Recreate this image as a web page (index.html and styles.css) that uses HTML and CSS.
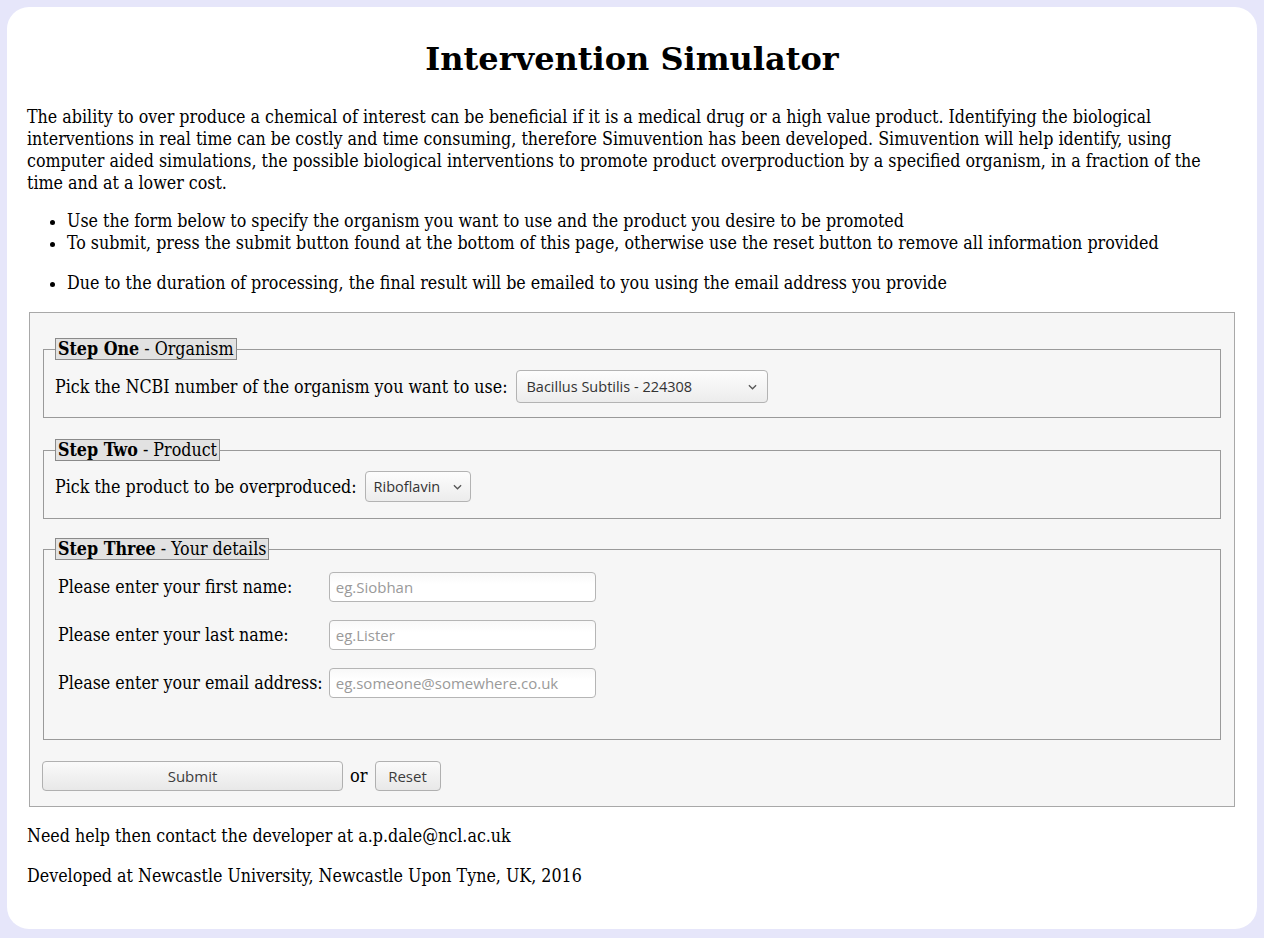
FILE: index.html
```html
<!DOCTYPE html>
<html>
<head>
<meta charset="utf-8">
<title>Intervention Simulator</title>
<link rel="stylesheet" href="styles.css">
</head>
<body>
<div class="page">
  <h1 class="title">Intervention Simulator</h1>
  <p class="intro">The ability to over produce a chemical of interest can be beneficial if it is a medical drug or a high value product. Identifying the biological interventions in real time can be costly and time consuming, therefore Simuvention has been developed. Simuvention will help identify, using computer aided simulations, the possible biological interventions to promote product overproduction by a specified organism, in a fraction of the time and at a lower cost.</p>
  <ul class="notes">
    <li>Use the form below to specify the organism you want to use and the product you desire to be promoted</li>
    <li>To submit, press the submit button found at the bottom of this page, otherwise use the reset button to remove all information provided</li>
    <li class="spaced">Due to the duration of processing, the final result will be emailed to you using the email address you provide</li>
  </ul>
  <form class="form">
    <fieldset class="outer">
      <fieldset class="step">
        <legend class="legend"><b>Step One</b> - Organism</legend>
        <div class="row">
          <label class="lbl">Pick the NCBI number of the organism you want to use:</label>
          <div class="select select-org"><span>Bacillus Subtilis - 224308</span><svg class="chev" viewBox="0 0 10 6" width="9" height="6"><path d="M1 1l4 4 4-4" fill="none" stroke="#555" stroke-width="1.4"/></svg></div>
        </div>
      </fieldset>
      <fieldset class="step step-two">
        <legend class="legend"><b>Step Two</b> - Product</legend>
        <div class="row">
          <label class="lbl">Pick the product to be overproduced:</label>
          <div class="select select-prod"><span>Riboflavin</span><svg class="chev" viewBox="0 0 10 6" width="9" height="6"><path d="M1 1l4 4 4-4" fill="none" stroke="#555" stroke-width="1.4"/></svg></div>
        </div>
      </fieldset>
      <fieldset class="step step-three">
        <legend class="legend"><b>Step Three</b> - Your details</legend>
        <table class="details">
          <tr><td class="dl">Please enter your first name:</td><td class="dv"><input class="field" type="text" placeholder="eg.Siobhan"></td></tr>
          <tr><td class="dl">Please enter your last name:</td><td class="dv"><input class="field" type="text" placeholder="eg.Lister"></td></tr>
          <tr><td class="dl">Please enter your email address:</td><td class="dv"><input class="field" type="text" placeholder="eg.someone@somewhere.co.uk"></td></tr>
        </table>
      </fieldset>
      <div class="actions">
        <button type="button" class="btn btn-submit">Submit</button>
        <span class="or">or</span>
        <button type="button" class="btn btn-reset">Reset</button>
      </div>
    </fieldset>
  </form>
  <p class="foot">Need help then contact the developer at a.p.dale@ncl.ac.uk</p>
  <p class="foot">Developed at Newcastle University, Newcastle Upon Tyne, UK, 2016</p>
</div>
</body>
</html>
```
FILE: styles.css
```css
html, body {
  margin: 0;
  padding: 0;
}
body {
  background: #e6e6fa;
  padding: 7px;
  font-family: "DejaVu Serif Condensed", "DejaVu Serif", serif;
  font-stretch: condensed;
  font-size: 17.7px;
  color: #000;
}
.page {
  background: #fff;
  border-radius: 22px;
  padding: 1px 20px 0;
  height: 922px;
  box-sizing: border-box;
}
.title {
  font-family: "DejaVu Serif", serif;
  font-stretch: normal;
  font-weight: bold;
  font-size: 32px;
  text-align: center;
  margin: 28px 0 24px;
  line-height: 46px;
}
.intro {
  margin: 0 0 16px;
  line-height: 22px;
}
.notes {
  margin: 0 0 18px;
  padding-left: 40px;
  line-height: 22px;
}
.notes .spaced {
  margin-top: 18px;
}
.form {
  margin: 0;
}
.outer {
  margin: 0 2px;
  padding: 25px 13px 15px;
  border: 1px solid #a8a8a8;
  background: #f6f6f6;
}
.step {
  margin: 0 0 21px;
  padding: 10px 12px 14px 11px;
  border: 1px solid #9a9a9a;
}
.step-two {
  padding-bottom: 16px;
  margin-bottom: 19px;
}
.legend {
  background: #e2e2e2;
  border: 1px solid #8a8a8a;
  padding: 0 2px;
  line-height: 20px;
}
.row {
  display: flex;
  align-items: center;
  gap: 8px;
}
.lbl {
  line-height: 22px;
}
.select {
  display: flex;
  align-items: center;
  justify-content: space-between;
  box-sizing: border-box;
  border: 1px solid #b3b3b3;
  border-radius: 4px;
  background: linear-gradient(#fdfdfd, #ececec);
  font-family: "Open Sans", "Noto Sans", sans-serif;
  font-stretch: normal;
  font-size: 14.5px;
  color: #333;
  padding: 0 10px;
}
.select-org {
  width: 252px;
  height: 33px;
}
.select-prod {
  width: 106px;
  height: 31px;
  padding: 0 8px;
}
.chev {
  display: block;
  flex: none;
}
.step-three {
  margin-bottom: 21px;
  padding-top: 8px;
  padding-bottom: 31px;
}
.details {
  border-spacing: 2px;
  margin-top: -6px;
}
.dl {
  padding: 8px 3px 8px 1px;
}
.dv {
  padding: 8px 1px;
}
.field {
  box-sizing: border-box;
  width: 267px;
  height: 30px;
  border: 1px solid #b5b5b5;
  border-radius: 4px;
  background: linear-gradient(#f8f8f8, #fff 40%);
  font-family: "Open Sans", "Noto Sans", sans-serif;
  font-size: 15px;
  padding: 0 6px;
  color: #333;
}
.field::placeholder {
  color: #9a9a9a;
}
.actions {
  display: flex;
  align-items: center;
  gap: 7px;
  margin-left: -1px;
}
.btn {
  box-sizing: border-box;
  height: 30px;
  border: 1px solid #b0b0b0;
  border-radius: 4px;
  background: linear-gradient(#fafafa, #e8e8e8);
  font-family: "Open Sans", "Noto Sans", sans-serif;
  font-size: 15px;
  color: #3c3c3c;
  padding: 0;
}
.btn-submit {
  width: 301px;
}
.btn-reset {
  width: 66px;
}
.or {
  font-size: 18px;
  line-height: 22px;
}
.foot {
  margin: 18px 0 0;
  line-height: 22px;
}
.foot + .foot {
  margin-top: 18px;
}
```
